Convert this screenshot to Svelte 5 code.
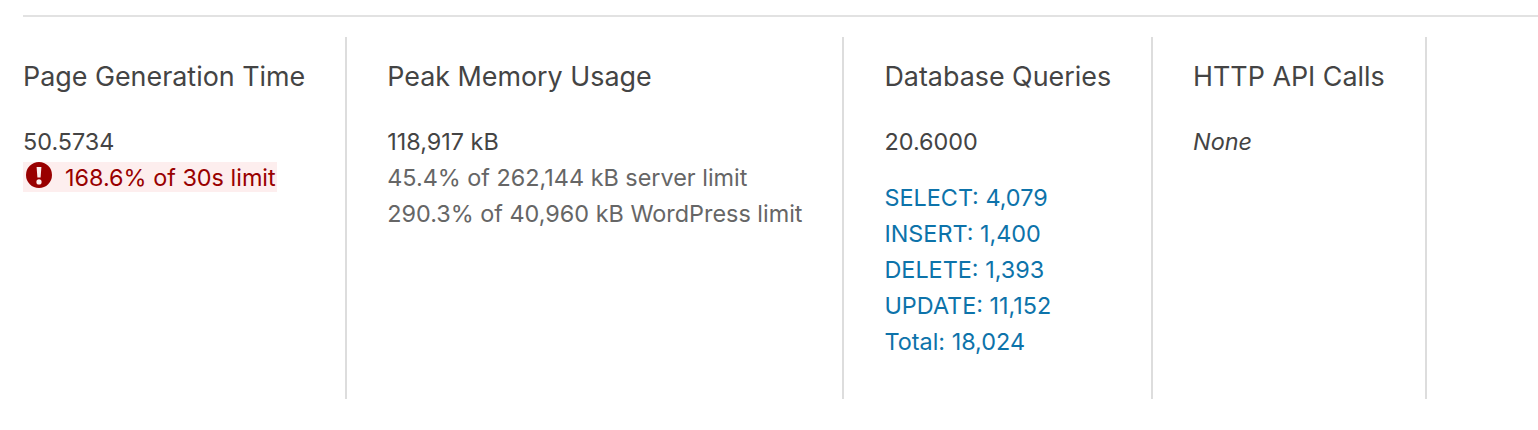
<script lang="ts">
    const queries = [
        ["SELECT", "4,079"],
        ["INSERT", "1,400"],
        ["DELETE", "1,393"],
        ["UPDATE", "11,152"],
        ["Total", "18,024"]
    ];
</script>

<div class="overview">
    <section>
        <h3>Page Generation Time</h3>
        <p>50.5734</p>
        <p class="warning">
            <svg viewBox="0 0 26 26" width="26" height="26" aria-hidden="true">
                <path d="M13 0a13 13 0 1 0 0 26 13 13 0 0 0 0-26zM10.600 5h4.800l-.8 10.500h-3.200zM13 17.300a2.600 2.600 0 1 1 0 5.200 2.600 2.600 0 0 1 0-5.200z" fill-rule="evenodd" />
            </svg>
            168.6% of 30s limit
        </p>
    </section>
    <section>
        <h3>Peak Memory Usage</h3>
        <p>118,917 kB</p>
        <p class="muted">45.4% of 262,144 kB server limit</p>
        <p class="muted">290.3% of 40,960 kB WordPress limit</p>
    </section>
    <section>
        <h3>Database Queries</h3>
        <p>20.6000</p>
        <ul>
            {#each queries as [label, count]}
                <li><a href="#queries">{label}: {count}</a></li>
            {/each}
        </ul>
    </section>
    <section>
        <h3>HTTP API Calls</h3>
        <p><em>None</em></p>
    </section>
</div>

<style>
    :global(body) {
        background: #fff;
    }

    .overview {
        display: flex;
        align-items: stretch;
        margin: 15px 0 0 23px;
        padding-top: 20px;
        border-top: 2px solid #e2e2e2;
        font-family: Inter, "Liberation Sans", sans-serif;
        font-size: 23.4px;
        line-height: 36px;
        color: #444;
    }

    section {
        height: 362px;
        padding: 0 40px;
        border-right: 2px solid #ddd;
    }

    section:first-child {
        padding-left: 0;
    }

    h3 {
        margin: 21px 0 30px;
        font-size: 26.87px;
        font-weight: 400;
        line-height: 36px;
        white-space: nowrap;
    }

    p {
        margin: 0;
        white-space: nowrap;
    }

    .muted {
        color: #666;
    }

    .warning {
        display: flex;
        gap: 13px;
        height: 30px;
        margin-top: 2px;
        line-height: 32px;
        width: 254px;
        background: #fdeeee;
        color: #990000;
    }

    .warning svg {
        fill: #990000;
        margin-left: 3px;
    }

    ul {
        list-style: none;
        margin: 20px 0 0;
        padding: 0;
    }

    a {
        color: #0d73aa;
        text-decoration: none;
    }
</style>
